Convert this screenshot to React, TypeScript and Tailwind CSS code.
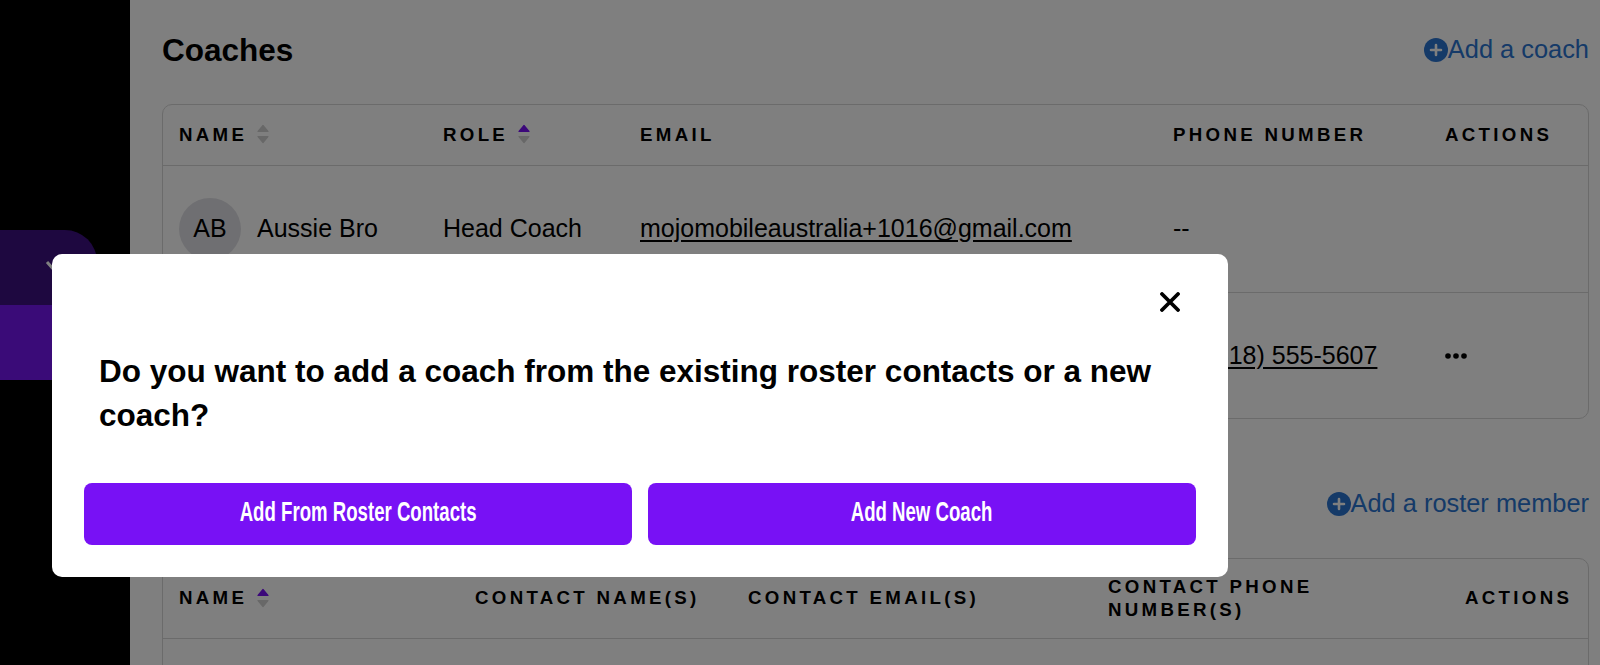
const font = { fontFamily: '"Liberation Sans", Arial, sans-serif' };

function SortIcon({ active = false }: { active?: boolean }) {
  return (
    <svg width="12" height="20" viewBox="0 0 12 20" className="ml-[10px] shrink-0">
      <path
        d="M6 1.5 L11 7.5 L1 7.5 Z"
        fill={active ? '#7811f5' : '#d0d0d0'}
        stroke={active ? '#7811f5' : '#d0d0d0'}
        strokeWidth="1.2"
        strokeLinejoin="round"
      />
      <path d="M1 12.5 L11 12.5 L6 18.5 Z" fill="#d0d0d0" stroke="#d0d0d0" strokeWidth="1.2" strokeLinejoin="round" />
    </svg>
  );
}

function PlusCircle() {
  return (
    <svg width="24" height="24" viewBox="0 0 24 24" className="shrink-0">
      <circle cx="12" cy="12" r="12" fill="#2a74d0" />
      <path d="M12 7v10M7 12h10" stroke="#fff" strokeWidth="2.6" strokeLinecap="round" />
    </svg>
  );
}

function AddLink({ label }: { label: string }) {
  return (
    <div className="flex items-center justify-end h-[50px]">
      <PlusCircle />
      <span className="text-[25.4px] leading-none text-[#2a74d0]">{label}</span>
    </div>
  );
}

function Th({ label, sort }: { label: string; sort?: 'off' | 'on' }) {
  return (
    <div className="flex items-center text-[18.7px] leading-[23px] font-bold tracking-[3.3px] text-black">
      <span>{label}</span>
      {sort && <SortIcon active={sort === 'on'} />}
    </div>
  );
}

function CloseIcon() {
  return (
    <svg width="20" height="20" viewBox="0 0 20 20">
      <path d="M2 2 L18 18 M18 2 L2 18" stroke="#000" strokeWidth="3.8" strokeLinecap="round" />
    </svg>
  );
}

function ModalButton({ label }: { label: string }) {
  return (
    <button className="flex-1 h-[62px] rounded-[8px] bg-[#7811f5] flex justify-center pt-[11px]">
      <span className="inline-block scale-x-[0.665] text-[28px] leading-[36px] font-bold text-white whitespace-nowrap">
        {label}
      </span>
    </button>
  );
}

export default function App() {
  return (
    <div className="relative flex h-[665px] w-[1600px] overflow-hidden bg-white" style={font}>
      {/* sidebar */}
      <aside className="w-[130px] shrink-0 bg-black pt-[230px]">
        <div className="w-[97px] h-[75px] rounded-tr-[32px] bg-[#3c1080] pl-[45px] pt-[30px]">
          <svg width="20" height="14" viewBox="0 0 20 14">
            <path d="M2 2 L10 11 L18 2" stroke="#fff" strokeWidth="3" fill="none" />
          </svg>
        </div>
        <div className="w-[97px] h-[75px] bg-[#7416f0]" />
      </aside>

      {/* main */}
      <main className="flex-1 pl-[32px] pr-[11px] pt-[25px]">
        <div className="flex items-center justify-between">
          <h2 className="text-[31.5px] leading-[50px] font-bold text-black">Coaches</h2>
          <AddLink label="Add a coach" />
        </div>

        <div className="mt-[29px] border border-[#d6d6d6] rounded-[10px] text-[25px] text-black">
          <div className="grid grid-cols-[264px_197px_533px_272px_1fr] items-center h-[61px] pl-[16px] pb-[2px] border-b border-[#d6d6d6]">
            <Th label="NAME" sort="off" />
            <Th label="ROLE" sort="on" />
            <Th label="EMAIL" />
            <Th label="PHONE NUMBER" />
            <Th label="ACTIONS" />
          </div>
          <div className="grid grid-cols-[264px_197px_533px_272px_1fr] items-center h-[127px] pl-[16px] border-b border-[#d6d6d6]">
            <div className="flex items-center gap-[16px]">
              <div className="w-[62px] h-[62px] rounded-full bg-[#dfdfe4] flex items-center justify-center">AB</div>
              <span>Aussie Bro</span>
            </div>
            <div>Head Coach</div>
            <div className="underline underline-offset-[3px]">mojomobileaustralia+1016@gmail.com</div>
            <div>--</div>
            <div />
          </div>
          <div className="grid grid-cols-[264px_197px_533px_272px_1fr] items-center h-[125px] pl-[16px]">
            <div />
            <div />
            <div />
            <div className="-ml-[2px] underline underline-offset-[3px] whitespace-nowrap">+1 (818) 555-5607</div>
            <svg width="22" height="6" viewBox="0 0 22 6">
              <circle cx="3" cy="3" r="2.8" fill="#000" />
              <circle cx="11" cy="3" r="2.8" fill="#000" />
              <circle cx="19" cy="3" r="2.8" fill="#000" />
            </svg>
          </div>
        </div>

        <div className="mt-[60px]">
          <AddLink label="Add a roster member" />
        </div>

        <div className="mt-[29px] border border-[#d6d6d6] rounded-t-[10px] h-[200px]">
          <div className="grid grid-cols-[296px_273px_360px_357px_1fr] items-center h-[80px] pl-[16px] pb-[2px] border-b border-[#d6d6d6]">
            <Th label="NAME" sort="on" />
            <Th label="CONTACT NAME(S)" />
            <Th label="CONTACT EMAIL(S)" />
            <div className="pr-[70px]">
              <Th label="CONTACT PHONE NUMBER(S)" />
            </div>
            <Th label="ACTIONS" />
          </div>
        </div>
      </main>

      {/* overlay + dialog */}
      <div className="absolute inset-0 bg-black/50" />
      <div className="absolute left-[52px] top-[254px] w-[1176px] h-[323px] rounded-[10px] bg-white">
        <div className="flex justify-end pt-[38px] pr-[48px]">
          <CloseIcon />
        </div>
        <h3 className="mt-[37px] px-[47px] text-[31.5px] leading-[44px] font-bold text-black">
          Do you want to add a coach from the existing roster contacts or a new coach?
        </h3>
        <div className="mt-[46px] flex gap-[16px] px-[32px]">
          <ModalButton label="Add From Roster Contacts" />
          <ModalButton label="Add New Coach" />
        </div>
      </div>
    </div>
  );
}
